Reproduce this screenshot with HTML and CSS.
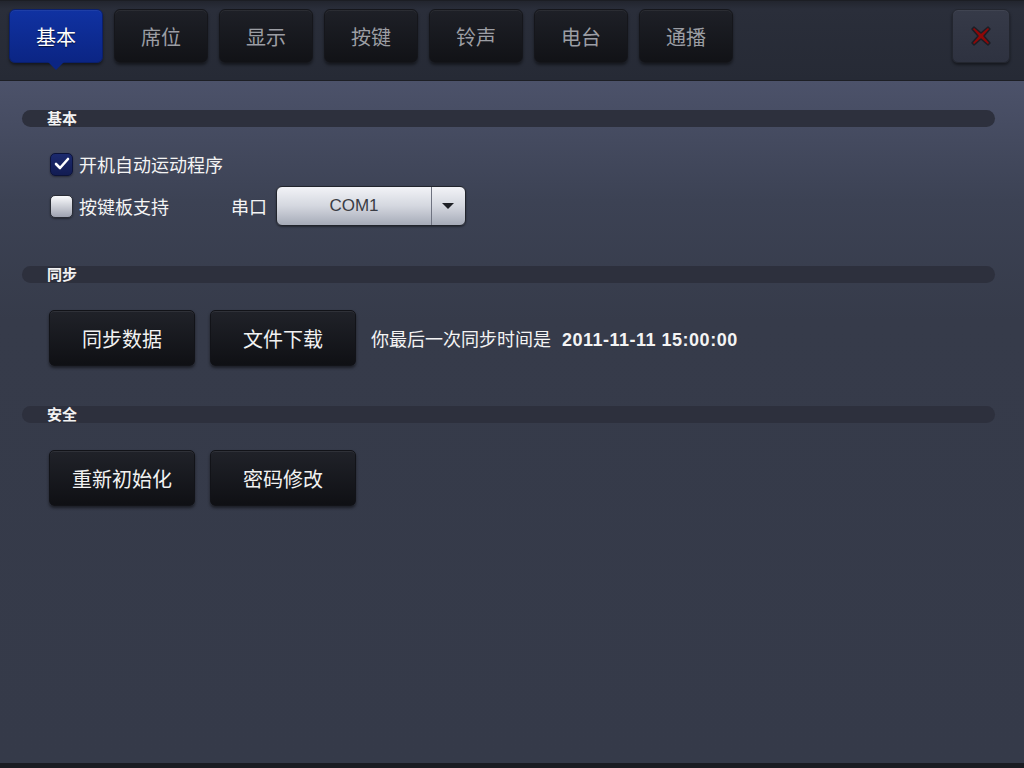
FILE: index.html
```html
<!DOCTYPE html>
<html lang="zh-CN">
<head>
    <meta charset="UTF-8">
    <meta name="viewport" content="width=device-width, initial-scale=1.0">
    <title>设置</title>
    <link rel="stylesheet" href="styles.css">
</head>
<body>
    <!-- top tab bar -->
    <div class="topbar">
        <div class="tabs">
            <div class="tab active">基本</div>
            <div class="tab">席位</div>
            <div class="tab">显示</div>
            <div class="tab">按键</div>
            <div class="tab">铃声</div>
            <div class="tab">电台</div>
            <div class="tab">通播</div>
        </div>
        <div class="close-button">
            <svg width="24" height="24" viewBox="0 0 24 24">
                <path d="M5 3 L12 9 L19 3 L21 5 L15 12 L21 19 L19 21 L12 15 L5 21 L3 19 L9 12 L3 5 Z" fill="#8e0808" stroke="#1c1e26" stroke-width="1.5" stroke-linejoin="round"/>
            </svg>
        </div>
    </div>

    <div class="content">
        <!-- SECTION 1: 基本 -->
        <div class="section-title"><span>基本</span></div>
        <div class="section-body basic">
            <div class="option-row">
                <span class="checkbox checked">
                    <svg width="16" height="14" viewBox="0 0 16 14">
                        <path d="M2 7 L6 11 L14 2" fill="none" stroke="#fff" stroke-width="2.6" stroke-linecap="round" stroke-linejoin="round"/>
                    </svg>
                </span>
                <span class="option-label">开机自动运动程序</span>
            </div>
            <div class="option-row">
                <span class="checkbox"></span>
                <span class="option-label">按键板支持</span>
                <span class="port-label">串口</span>
                <div class="select">
                    <span class="select-value">COM1</span>
                    <span class="select-arrow"></span>
                </div>
            </div>
        </div>

        <!-- SECTION 2: 同步 -->
        <div class="section-title"><span>同步</span></div>
        <div class="section-body buttons">
            <button class="dark-button">同步数据</button>
            <button class="dark-button">文件下载</button>
            <span class="sync-info">你最后一次同步时间是<b>2011-11-11 15:00:00</b></span>
        </div>

        <!-- SECTION 3: 安全 -->
        <div class="section-title"><span>安全</span></div>
        <div class="section-body buttons">
            <button class="dark-button">重新初始化</button>
            <button class="dark-button">密码修改</button>
        </div>
    </div>
</body>
</html>
```

FILE: styles.css
```css
body {
    margin: 0;
    height: 768px;
    overflow: hidden;
    font-family: "Liberation Sans", "Noto Sans CJK SC", sans-serif;
    color: #fff;
    background: #1a1c22;
}
.topbar {
    height: 81px;
    box-sizing: border-box;
    padding: 8px 14px 0 9px;
    display: flex;
    justify-content: space-between;
    align-items: flex-start;
    background: linear-gradient(#22252e, #2a2e3a 10%, #262a35);
    border-top: 1px solid #1c1e24;
    border-bottom: 1px solid #1d1f25;
}
.tabs {
    display: flex;
    gap: 11px;
}
.tab {
    position: relative;
    width: 94px;
    height: 54px;
    box-sizing: border-box;
    border-radius: 6px;
    background: linear-gradient(#1e2027, #111216);
    border: 1px solid #15161b;
    box-shadow: 0 2px 3px rgba(0, 0, 0, 0.45), inset 0 1px 0 rgba(255, 255, 255, 0.06);
    color: #9c9ea4;
    font-size: 20px;
    display: flex;
    align-items: center;
    justify-content: center;
}
.tab.active {
    background: linear-gradient(#1032a2, #0b2584);
    border-color: #0a1f6c;
    color: #fff;
    text-shadow: 0 1px 1px rgba(0, 0, 0, 0.6);
}
.tab.active::after {
    content: "";
    position: absolute;
    left: 50%;
    bottom: -8px;
    margin-left: -8px;
    border-left: 8px solid transparent;
    border-right: 8px solid transparent;
    border-top: 8px solid #0b2584;
}
.close-button {
    width: 58px;
    height: 54px;
    box-sizing: border-box;
    border-radius: 6px;
    background: linear-gradient(#363a48, #2e3240);
    border: 1px solid #23262f;
    box-shadow: 0 2px 3px rgba(0, 0, 0, 0.45), inset 0 1px 0 rgba(255, 255, 255, 0.05);
    display: flex;
    align-items: center;
    justify-content: center;
}
.content {
    height: 684px;
    box-sizing: border-box;
    padding-top: 29px;
    border-bottom: 2px solid #1a1c22;
    background: linear-gradient(#4c526a, #3c4254 120px, #363b4a 240px, #353a49);
}
.section-title {
    margin-left: 22px;
    width: 973px;
    height: 17px;
    border-radius: 9px;
    background: #2d303d;
    box-sizing: border-box;
    padding-left: 25px;
    font-size: 15px;
    line-height: 17px;
    font-weight: bold;
    color: #f2f2f2;
}
.section-body {
    margin-left: 49px;
}
.section-body.basic {
    padding-top: 25px;
    padding-bottom: 40px;
}
.option-row {
    display: flex;
    align-items: center;
    height: 40px;
}
.option-row:first-child {
    height: 24px;
    margin-bottom: 10px;
}
.checkbox {
    width: 23px;
    height: 23px;
    box-sizing: border-box;
    border-radius: 5px;
    margin-left: 1px;
    margin-right: 6px;
    background: linear-gradient(#fafbfd, #9ea2b0);
    border: 1px solid #2a2d36;
    box-shadow: 0 1px 2px rgba(0, 0, 0, 0.4);
    display: flex;
    align-items: center;
    justify-content: center;
}
.checkbox.checked {
    background: linear-gradient(#1c2a6e, #121c52);
    border-color: #0c133a;
}
.option-label {
    font-size: 18px;
    color: #f4f4f4;
}
.port-label {
    margin-left: 62px;
    margin-right: 9px;
    font-size: 18px;
    color: #f4f4f4;
}
.select {
    width: 190px;
    height: 40px;
    box-sizing: border-box;
    border-radius: 6px;
    border: 1px solid #22252d;
    background: linear-gradient(#f2f3f7, #d4d7df 50%, #a6abb8);
    box-shadow: 0 1px 2px rgba(0, 0, 0, 0.4);
    display: flex;
}
.select-value {
    flex: 1;
    border-right: 1px solid #6e7280;
    color: #3a3c44;
    font-size: 17px;
    display: flex;
    align-items: center;
    justify-content: center;
}
.select-arrow {
    width: 33px;
    position: relative;
}
.select-arrow::after {
    content: "";
    position: absolute;
    left: 10px;
    top: 16px;
    border-left: 6px solid transparent;
    border-right: 6px solid transparent;
    border-top: 6px solid #1e2026;
}
.section-body.buttons {
    display: flex;
    align-items: center;
    gap: 15px;
    padding-top: 27px;
    padding-bottom: 40px;
}
.dark-button {
    width: 146px;
    height: 56px;
    border-radius: 5px;
    border: 1px solid #121318;
    background: linear-gradient(#202229, #0f1014);
    box-shadow: 0 2px 3px rgba(0, 0, 0, 0.5), inset 0 1px 0 rgba(255, 255, 255, 0.07);
    color: #f2f2f2;
    font-family: "Liberation Sans", "Noto Sans CJK SC", sans-serif;
    font-size: 20px;
    cursor: pointer;
}
.sync-info {
    font-size: 18px;
    color: #f4f4f4;
}
.sync-info b {
    margin-left: 11px;
    letter-spacing: 0.5px;
}
```
